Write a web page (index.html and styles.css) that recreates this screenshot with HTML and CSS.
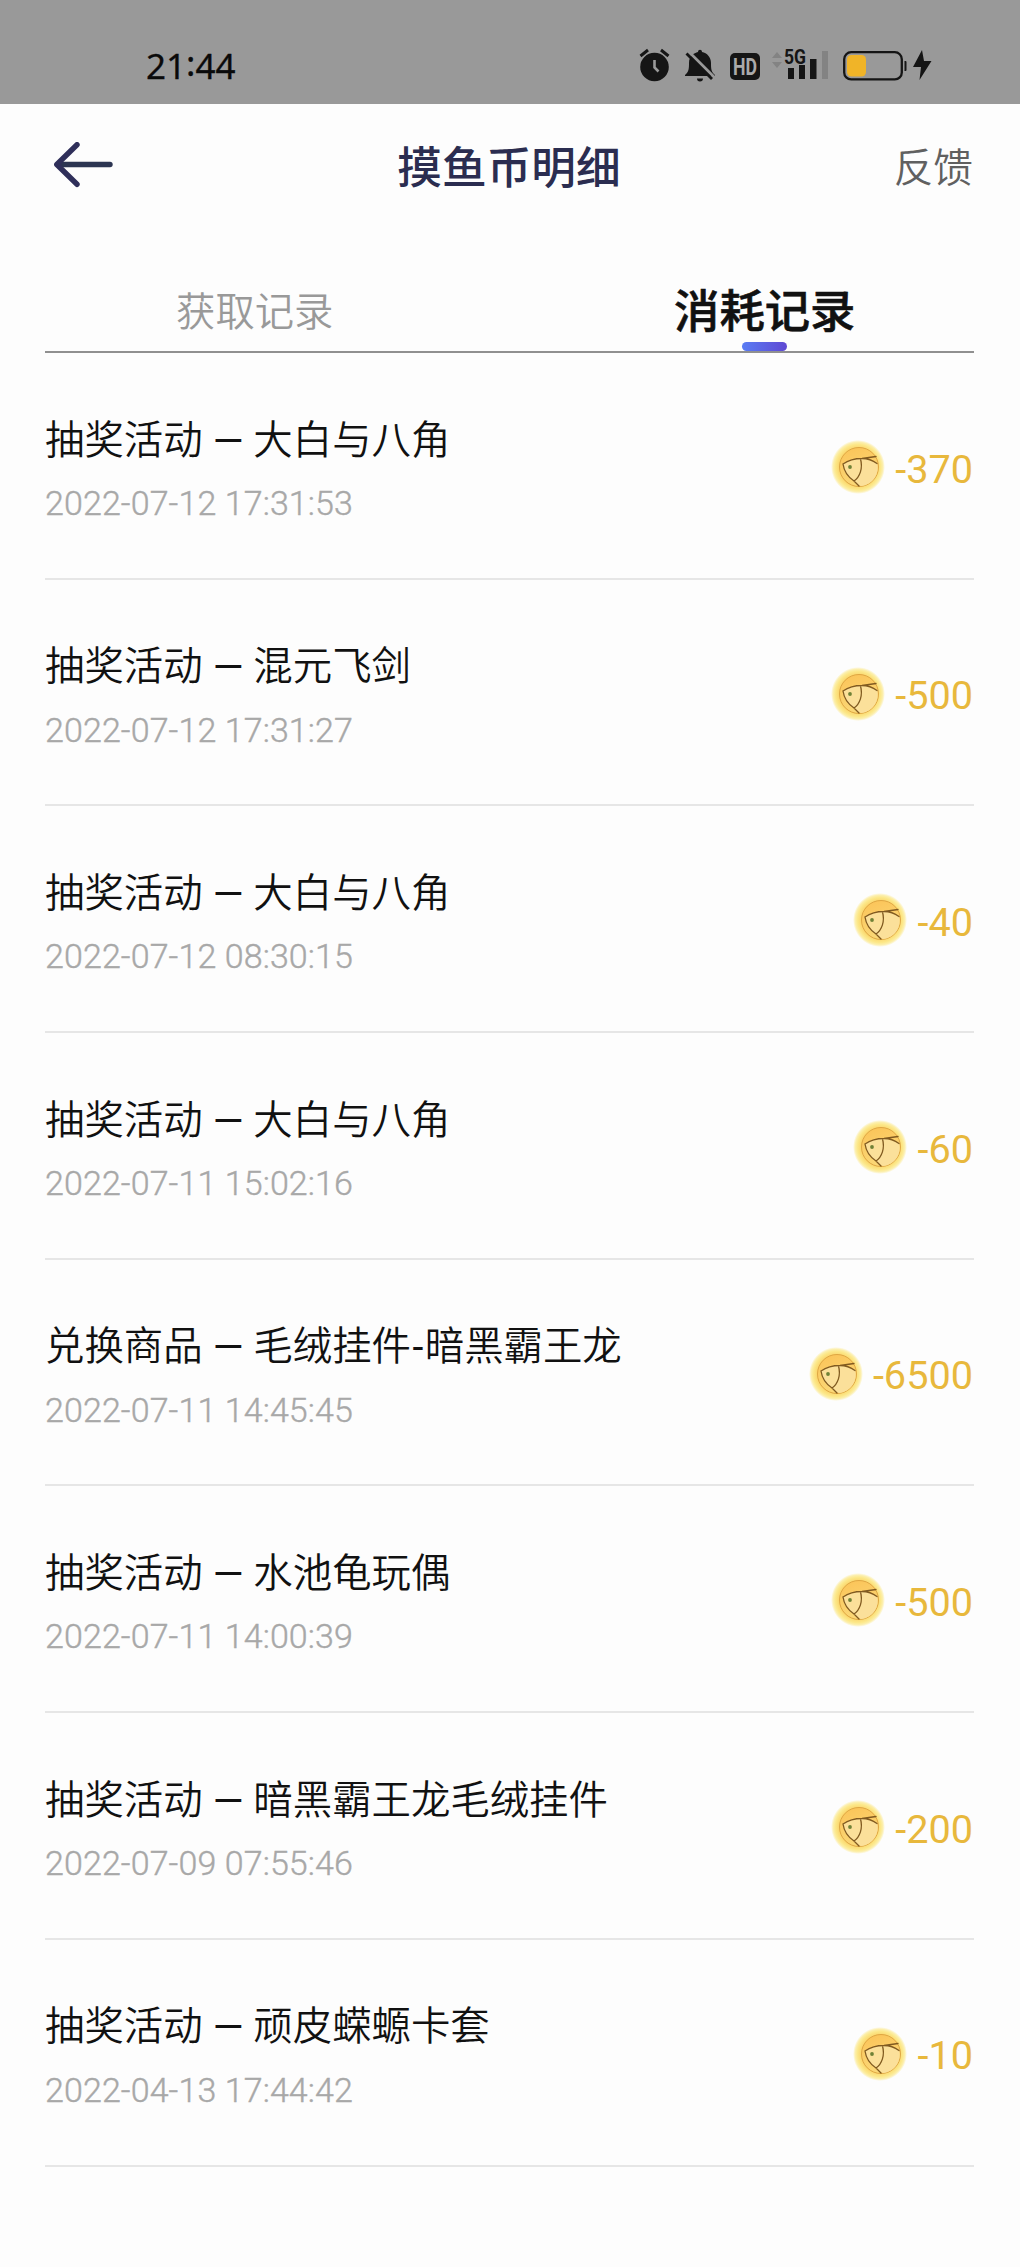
FILE: index.html
```html
<!DOCTYPE html>
<html lang="zh-CN">
<head>
<meta charset="utf-8">
<title>摸鱼币明细</title>
<link rel="stylesheet" href="styles.css">
</head>
<body>
<svg class="defs" aria-hidden="true">
  <defs>
    <radialGradient id="rim"><stop offset="0" stop-color="#fbd36a"/><stop offset=".7" stop-color="#fbd66c"/><stop offset=".84" stop-color="#fce88a"/><stop offset=".92" stop-color="#fcefae"/><stop offset="1" stop-color="#fcefae" stop-opacity="0"/></radialGradient>
    <linearGradient id="face" x1="0" y1="0" x2=".3" y2="1"><stop offset="0" stop-color="#fbc357"/><stop offset="1" stop-color="#fbd877"/></linearGradient>
    <symbol id="coin" viewBox="0 0 54 54">
      <circle cx="27" cy="27" r="27" fill="url(#rim)"/>
      <circle cx="28" cy="27" r="19.500" fill="url(#face)" stroke="#dfa743" stroke-width="1"/>
      <path d="M12 24C18 19 28 17.500 36 19L46 23C49 33 42 45 30 46C27 45 24 43 23 41C17 37 13 31 12 24Z" fill="#fbe09a"/>
      <path d="M12 24C17 20.500 24 18.500 31 18.500L45 16.500M31 18.500C37 18.500 42 20.500 46 23.500M12 24C13 31 17 37 23 41C29 37 32 28 29.500 19M23 41L28 46" fill="none" stroke="#805a20" stroke-width="1.300" stroke-linecap="round"/>
      <circle cx="19" cy="27" r="1.900" fill="#6f8136"/>
    </symbol>
  </defs>
</svg>
<header class="status">
  <div class="clock">21<span class="colon">:</span>44</div>
  <svg class="status-icons" width="320" height="40" viewBox="0 0 320 40">
    <g fill="#151515">
      <circle cx="15.500" cy="21" r="14.300"/>
      <path d="M1.500 10L9 4M29.500 10L22 4" stroke="#151515" stroke-width="3"/>
      <path d="M15.500 14v7.500l4 4" fill="none" stroke="#999" stroke-width="2.600"/>
      <path d="M46 29c4-3 4-7 4-12 0-7 5-10 9-11 0-3 4-3 4 0 5 1 9 5 9 11 0 5 0 9 4 12v1H46zM58 32.500h6a3 3 0 0 1-6 0z"/>
      <path d="M49 5L76 32" stroke="#999" stroke-width="3"/>
      <path d="M47.500 7.500L73 33" stroke="#151515" stroke-width="2.800"/>
      <rect x="91" y="7" width="30" height="27" rx="5"/>
      <path d="M133 12l5-6 5 6zM133 16l5 6 5-6z" fill="#838383"/>
      <rect x="149" y="22" width="6" height="11"/><rect x="160" y="19" width="6" height="14"/><rect x="171" y="13" width="6.500" height="20"/>
      <rect x="183" y="5" width="6" height="28" fill="#838383"/>
      <rect x="205.200" y="6.200" width="57.600" height="27.200" rx="7" fill="none" stroke="#151515" stroke-width="2.300"/>
      <rect x="208" y="9" width="19" height="21.500" rx="4.500" fill="#f0b428"/>
      <path d="M265.500 15h1q1 0 1 1v8q0 1-1 1h-1zM283 4l-9 17h8l-1.500 13 12-19h-7.500z"/>
    </g>
    <text class="hd" x="106" y="28.500" text-anchor="middle" textLength="24" lengthAdjust="spacingAndGlyphs">HD</text>
    <text class="fiveg" x="145" y="17.500" textLength="22" lengthAdjust="spacingAndGlyphs">5G</text>
  </svg>
</header>
<nav class="navbar">
  <svg class="back" width="60" height="46" viewBox="0 0 60 46" fill="none" stroke-linecap="round" stroke-linejoin="round" stroke-width="5.400"><path d="M5 22.500H56" stroke="#2c3552"/><path d="M23 2.700L2.800 22.500L23 42.300" stroke="#2f2f5a"/></svg>
  <h1 class="title">摸鱼币明细</h1>
  <a class="feedback">反馈</a>
</nav>
<div class="tabs">
  <div class="tab">获取记录</div>
  <div class="tab active">消耗记录<i class="indicator"></i></div>
</div>
<main class="list">
  <article class="row"><div><h2 class="name">抽奖活动<span class="dash"> — </span>大白与八角</h2><time class="time">2022-07-12 17:31:53</time></div><div class="amount"><svg class="coin"><use href="#coin"/></svg>-370</div></article>
  <article class="row"><div><h2 class="name">抽奖活动<span class="dash"> — </span>混元飞剑</h2><time class="time">2022-07-12 17:31:27</time></div><div class="amount"><svg class="coin"><use href="#coin"/></svg>-500</div></article>
  <article class="row"><div><h2 class="name">抽奖活动<span class="dash"> — </span>大白与八角</h2><time class="time">2022-07-12 08:30:15</time></div><div class="amount"><svg class="coin"><use href="#coin"/></svg>-40</div></article>
  <article class="row"><div><h2 class="name">抽奖活动<span class="dash"> — </span>大白与八角</h2><time class="time">2022-07-11 15:02:16</time></div><div class="amount"><svg class="coin"><use href="#coin"/></svg>-60</div></article>
  <article class="row"><div><h2 class="name">兑换商品<span class="dash"> — </span>毛绒挂件<span class="hyphen">-</span>暗黑霸王龙</h2><time class="time">2022-07-11 14:45:45</time></div><div class="amount"><svg class="coin"><use href="#coin"/></svg>-6500</div></article>
  <article class="row"><div><h2 class="name">抽奖活动<span class="dash"> — </span>水池龟玩偶</h2><time class="time">2022-07-11 14:00:39</time></div><div class="amount"><svg class="coin"><use href="#coin"/></svg>-500</div></article>
  <article class="row"><div><h2 class="name">抽奖活动<span class="dash"> — </span>暗黑霸王龙毛绒挂件</h2><time class="time">2022-07-09 07:55:46</time></div><div class="amount"><svg class="coin"><use href="#coin"/></svg>-200</div></article>
  <article class="row"><div><h2 class="name">抽奖活动<span class="dash"> — </span>顽皮蝾螈卡套</h2><time class="time">2022-04-13 17:44:42</time></div><div class="amount"><svg class="coin"><use href="#coin"/></svg>-10</div></article>
</main>
</body>
</html>
```
FILE: styles.css
```css
* { box-sizing: border-box; }
body { margin: 0; width: 1020px; height: 2267px; overflow: hidden; background: #fdfdfd; font-family: Roboto, "Noto Sans CJK SC", sans-serif; }
.defs { position: absolute; width: 0; height: 0; }
.status { display: flex; justify-content: space-between; height: 104px; padding: 46px 61px 0 146px; background: #999; }
.clock { font: 400 35px/40px "Noto Sans", sans-serif; color: #0a0a0a; -webkit-text-stroke: .3px #0a0a0a; }
.colon { position: relative; top: -3px; }
.status-icons { display: block; }
.hd { font: 700 23px "Roboto", sans-serif; fill: #aaa; }
.fiveg { font: 700 20px "Roboto", sans-serif; fill: #151515; }
.navbar { display: grid; grid-template-columns: 1fr auto 1fr; align-items: center; height: 126px; padding: 2px 47px 0 54px; }
.back { display: block; margin-bottom: 7px; }
.title { margin: 2px 0 0 -9px; font-size: 44.700px; font-weight: 500; line-height: 60px; color: #2b2d50; }
.feedback { justify-self: end; font-size: 39.670px; font-weight: 350; line-height: 60px; color: #606060; padding-top: 2px; }
.tabs { display: grid; grid-template-columns: 1fr 1fr; height: 123px; margin: 0 46px 0 45px; padding: 50px 0 0; border-bottom: 2px solid #909090; }
.tab { position: relative; font-size: 39.330px; font-weight: 350; line-height: 66px; text-align: center; color: #999; }
.tab:first-child { padding-right: 45px; }
.active { padding-left: 46px; font-size: 45.330px; font-weight: 500; color: #111; -webkit-text-stroke: .6px #111; }
.indicator { position: absolute; left: 50%; bottom: 0; width: 45px; height: 9px; border-radius: 5px; background: linear-gradient(90deg, #597cf3, #5f48d3); }
.list { margin: 0 46px 0 45px; }
.row { display: flex; justify-content: space-between; height: 226.700px; padding-top: 55.500px; border-bottom: 2px solid #e6e6e6; }
.name { margin: 0; font-size: 39.400px; font-weight: 350; line-height: 64px; color: #111; }
.dash { padding-left: .5px; font-weight: 400; }
.hyphen { padding: 0 1.500px; font-weight: 400; }
.time { display: block; margin-top: -1.500px; font-size: 34px; line-height: 64px; font-weight: 300; letter-spacing: .1px; color: #a8a8a8; -webkit-text-stroke: .4px #a8a8a8; }
.amount { display: flex; align-items: center; height: 64px; margin: 28.500px 1px 0 0; font-size: 39.670px; color: #e8b83c; }
.coin { width: 54px; height: 54px; margin: 0 10px 4px 0; }
```
